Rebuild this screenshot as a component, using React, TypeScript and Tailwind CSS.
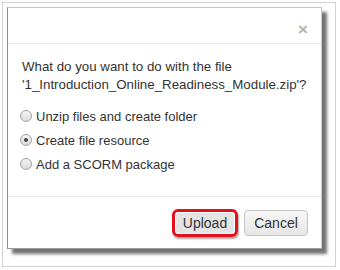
import { useState } from 'react'

const options = [
  'Unzip files and create folder',
  'Create file resource',
  'Add a SCORM package',
]

function Radio({ checked }: { checked: boolean }) {
  return (
    <span className="flex h-[12px] w-[12px] shrink-0 items-center justify-center rounded-full border border-[#a3a3a3] bg-gradient-to-b from-[#f4f4f4] to-[#dcdcdc]">
      {checked && <span className="h-[4px] w-[4px] rounded-full bg-[#444]" />}
    </span>
  )
}

export default function App() {
  const [picked, setPicked] = useState(1)

  return (
    <div className="h-[270px] w-[340px] bg-white pl-[2px] pt-[2px] font-['Liberation_Sans',Arial,sans-serif] text-[13px] text-[#333]">
      <div className="h-[265px] w-[334px] border border-[#d2d2d2] pl-[4px] pt-[4px]">
        <div className="flex h-[242px] w-[315px] flex-col border border-[#c8c8c8] border-l-[#8c8c8c] border-b-[#9a9a9a] bg-white shadow-[5px_5px_3px_rgba(0,0,0,0.55)]">
          <div className="flex h-[36px] items-end justify-end border-b border-[#e8e8e8] pb-[5px] pr-[13px]">
            <span className="text-[17px] font-bold leading-none text-[#b3b3b3]">×</span>
          </div>
          <div className="flex-1 px-[14px] pt-[14px]">
            <p className="text-[13.3px] leading-[18px]">
              What do you want to do with the file
              <br />
              '1_Introduction_Online_Readiness_Module.zip'?
            </p>
            <div className="-ml-[2px] mt-[10px] flex flex-col">
              {options.map((label, i) => (
                <label
                  key={label}
                  onClick={() => setPicked(i)}
                  className="flex h-[24px] cursor-pointer items-center gap-[4px]"
                >
                  <Radio checked={picked === i} />
                  <span className="text-[13px] leading-none">{label}</span>
                </label>
              ))}
            </div>
          </div>
          <div className="flex h-[52px] items-center justify-end gap-[6px] border-t border-[#e8e8e8] pr-[13px] pt-[1px]">
            <div className="rounded-[6px] border-[3px] border-[#e3101b] p-[1px] shadow-[1px_2px_2px_rgba(0,0,0,0.35)]">
              <button className="h-[20px] w-[58px] rounded-[3px] bg-[#e4e4e4] text-[14px] leading-none text-[#333]">
                Upload
              </button>
            </div>
            <button className="h-[26px] w-[64px] rounded-[4px] border border-[#c4c4c4] bg-gradient-to-b from-[#f7f7f7] to-[#e6e6e6] text-[14px] leading-none text-[#333]">
              Cancel
            </button>
          </div>
        </div>
      </div>
    </div>
  )
}
